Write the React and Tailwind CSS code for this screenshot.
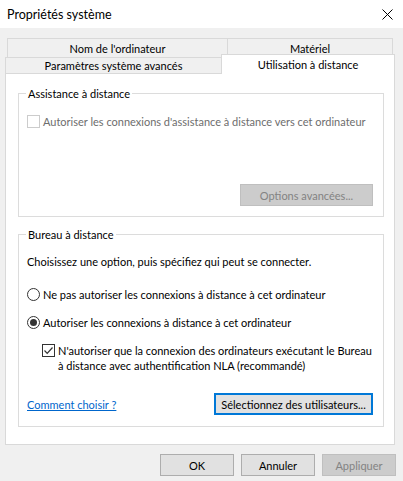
export default function App() {
  return (
    <div className="w-[403px] h-[481px] bg-[#f0f0f0] flex flex-col font-['Lato','Liberation_Sans',Arial,sans-serif] text-[11px] leading-[15px] text-black overflow-hidden whitespace-nowrap">
      <div className="h-[28px] bg-white flex items-center justify-between pl-[7px] pr-[10px] shrink-0">
        <span className="text-[12.5px]">Propriétés système</span>
        <svg width="11" height="11" viewBox="0 0 11 11" className="text-black">
          <path d="M0.5 0.5 L10.5 10.5 M10.5 0.5 L0.5 10.5" stroke="currentColor" strokeWidth="1" fill="none" />
        </svg>
      </div>

      <div className="pt-[10px] pl-[5px] flex flex-col shrink-0">
        <div className="flex ml-[2px] w-[386px] h-[19px]">
          <div className="w-[221px] border-t border-l border-r border-[#d9d9d9] flex items-center justify-center">
            Nom de l'ordinateur
          </div>
          <div className="flex-1 border-t border-r border-[#d9d9d9] flex items-center justify-center">
            Matériel
          </div>
        </div>
        <div className="flex h-[17px] items-end">
          <div className="w-[216px] h-[17px] border-t border-l border-b border-[#d9d9d9] flex items-center justify-center">
            Paramètres système avancés
          </div>
          <div className="relative z-10 w-[174px] h-[20px] bg-white border-t border-l border-r border-[#d9d9d9] flex items-start justify-center pt-[2px]">
            Utilisation à distance
          </div>
        </div>

        <div className="w-[390px] h-[371px] bg-white border-l border-r border-b border-[#d9d9d9] flex flex-col pl-[12px] pt-[19px]">
          <div className="relative w-[366px] h-[124px] border border-[#dcdcdc] flex flex-col pl-[8px]">
            <span className="absolute -top-[8px] left-[7px] bg-white px-[2px] leading-[15px]">Assistance à distance</span>
            <div className="flex items-center mt-[21px] h-[13px] text-[#6d6d6d]">
              <span className="w-[13px] h-[13px] border border-[#cccccc] bg-white shrink-0" />
              <span className="ml-[3px]">Autoriser les connexions d'assistance à distance vers cet ordinateur</span>
            </div>
            <div className="flex justify-end pr-[10px] mt-[56px]">
              <div className="w-[133px] h-[22px] bg-[#cccccc] border border-[#bfbfbf] text-[#838383] flex items-center justify-center">
                Options avancées...
              </div>
            </div>
          </div>

          <div className="relative w-[366px] h-[193px] mt-[17px] border border-[#dcdcdc] flex flex-col pl-[8px]">
            <span className="absolute -top-[8px] left-[7px] bg-white px-[2px] leading-[15px]">Bureau à distance</span>
            <div className="flex items-center h-[16px] mt-[18px]">
              Choisissez une option, puis spécifiez qui peut se connecter.
            </div>
            <div className="flex items-center h-[16px] mt-[17px]">
              <span className="w-[13px] h-[13px] rounded-full border border-[#333333] bg-white shrink-0" />
              <span className="ml-[3px]">Ne pas autoriser les connexions à distance à cet ordinateur</span>
            </div>
            <div className="flex items-center h-[16px] mt-[12px]">
              <span className="w-[13px] h-[13px] rounded-full border border-[#333333] bg-white shrink-0 flex items-center justify-center">
                <span className="w-[7px] h-[7px] rounded-full bg-[#333333]" />
              </span>
              <span className="ml-[3px]">Autoriser les connexions à distance à cet ordinateur</span>
            </div>
            <div className="flex items-start mt-[13px] pl-[15px]">
              <span className="w-[13px] h-[13px] border border-[#333333] bg-white shrink-0 mt-[1px] flex items-center justify-center">
                <svg width="11" height="11" viewBox="0 0 11 11">
                  <path d="M1.5 5.5 L4.2 8.3 L9.5 2.5" stroke="#333333" strokeWidth="1.2" fill="none" />
                </svg>
              </span>
              <span className="ml-[3px] leading-[15px]">
                N'autoriser que la connexion des ordinateurs exécutant le Bureau
                <br />à distance avec authentification NLA (recommandé)
              </span>
            </div>
            <div className="flex items-center justify-between pr-[10px] mt-[20px]">
              <span className="text-[#0066cc] underline">Comment choisir ?</span>
              <div className="w-[159px] h-[22px] bg-[#e1e1e1] border-2 border-[#0078d7] flex items-center justify-center">
                Sélectionnez des utilisateurs...
              </div>
            </div>
          </div>
        </div>
      </div>

      <div className="flex justify-end gap-[7px] pr-[7px] mt-[9px]">
        <div className="w-[74px] h-[22px] bg-[#e1e1e1] border border-[#adadad] flex items-center justify-center">OK</div>
        <div className="w-[74px] h-[22px] bg-[#e1e1e1] border border-[#adadad] flex items-center justify-center">Annuler</div>
        <div className="w-[74px] h-[22px] bg-[#cccccc] border border-[#bfbfbf] text-[#838383] flex items-center justify-center">Appliquer</div>
      </div>
    </div>
  );
}
